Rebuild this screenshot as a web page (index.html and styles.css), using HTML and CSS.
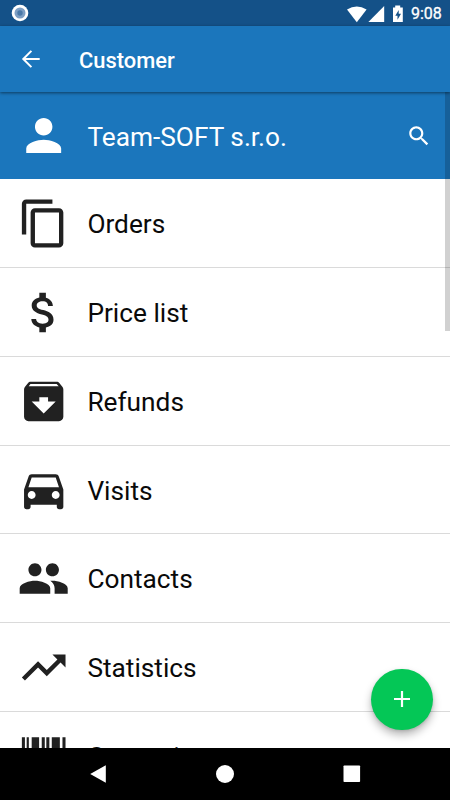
FILE: index.html
```html
<!DOCTYPE html>
<html lang="en">
<head>
<meta charset="utf-8">
<title>Customer</title>
<link rel="stylesheet" href="styles.css">
</head>
<body>
<div class="screen">
  <div class="status">
    <svg class="dot" viewBox="0 0 18 18"><circle cx="9" cy="9" r="8.3" fill="#fff"/><circle cx="9" cy="9" r="5.5" fill="#7d9fc4"/><circle cx="9" cy="9" r="2.7" fill="#4a79a9"/></svg>
    <svg class="signals" viewBox="0 0 60 18" fill="#fff">
      <path d="M0 3.4Q9.8-2.6 19.6 3.4L9.8 16.2Z"/>
      <path d="M37.2 0V16H21.4Z"/>
      <path fill-rule="evenodd" d="M46 1.4h2.2V-.4h5v1.8h2.6V16H46ZM51.7 4l-3.4 5.7h2.2v4l3.5-6h-2.3Z"/>
    </svg>
    <span class="clock">9:08</span>
  </div>
  <header class="toolbar">
    <svg class="back" viewBox="0 0 24 24"><path fill="none" stroke="#fff" stroke-width="2" d="M20.700 12H4.500M12.400 3.900L4.300 12l8.100 8.100"/></svg>
    <h1>Customer</h1>
  </header>
  <main class="content">
    <div class="row hero">
      <svg class="icon" viewBox="0 0 24 24"><path d="M12 12c2.21 0 4-1.79 4-4s-1.79-4-4-4-4 1.79-4 4 1.79 4 4 4zm0 2c-2.67 0-8 1.34-8 4v2h16v-2c0-2.66-5.33-4-8-4z"/></svg>
      <span>Team-SOFT s.r.o.</span>
      <svg class="search" viewBox="0 0 24 24"><path d="M15.5 14h-.79l-.28-.27C15.41 12.59 16 11.11 16 9.5 16 5.91 13.09 3 9.5 3S3 5.91 3 9.5 5.91 16 9.5 16c1.61 0 3.09-.59 4.23-1.57l.27.28v.79l5 4.99L20.49 19l-4.99-5zm-6 0C7.01 14 5 11.99 5 9.5S7.01 5 9.5 5 14 7.01 14 9.5 11.99 14 9.5 14z"/></svg>
    </div>
    <div class="row">
      <svg class="icon" viewBox="0 0 24 24"><path d="M16 1H4c-1.1 0-2 .9-2 2v14h2V3h12V1zm3 4H8c-1.1 0-2 .9-2 2v14c0 1.1.9 2 2 2h11c1.1 0 2-.9 2-2V7c0-1.1-.9-2-2-2zm0 16H8V7h11v14z"/></svg>
      <span>Orders</span>
    </div>
    <div class="row">
      <svg class="icon" viewBox="0 0 24 24"><path d="M11.8 10.9c-2.27-.59-3-1.2-3-2.15 0-1.09 1.01-1.85 2.7-1.85 1.78 0 2.44.85 2.5 2.1h2.21c-.07-1.72-1.12-3.3-3.21-3.81V3h-3v2.16c-1.94.42-3.5 1.68-3.5 3.61 0 2.31 1.91 3.46 4.7 4.13 2.5.6 3 1.48 3 2.41 0 .69-.49 1.79-2.7 1.79-2.06 0-2.87-.92-2.98-2.1h-2.2c.12 2.19 1.76 3.42 3.68 3.83V21h3v-2.15c1.95-.37 3.5-1.5 3.5-3.55 0-2.84-2.43-3.81-4.7-4.4z"/></svg>
      <span>Price list</span>
    </div>
    <div class="row">
      <svg class="icon" viewBox="0 0 24 24"><path d="M20.54 5.23l-1.39-1.68C18.88 3.21 18.47 3 18 3H6c-.47 0-.88.21-1.16.55L3.46 5.23C3.17 5.57 3 6.02 3 6.5V19c0 1.1.9 2 2 2h14c1.1 0 2-.9 2-2V6.5c0-.48-.17-.93-.46-1.27zM12 17.5L6.5 12H10v-2h4v2h3.5L12 17.5zM5.12 5l.81-1h12l.94 1H5.12z"/></svg>
      <span>Refunds</span>
    </div>
    <div class="row">
      <svg class="icon" viewBox="0 0 24 24"><path d="M18.92 6.01C18.72 5.42 18.16 5 17.5 5h-11c-.66 0-1.21.42-1.42 1.01L3 12v8c0 .55.45 1 1 1h1c.55 0 1-.45 1-1v-1h12v1c0 .55.45 1 1 1h1c.55 0 1-.45 1-1v-8l-2.08-5.99zM6.500 16.300c-1 0-1.800-.8-1.800-1.800s.8-1.800 1.800-1.800 1.800.8 1.800 1.800-.8 1.800-1.800 1.800zm11 0c-1 0-1.800-.8-1.800-1.800s.8-1.800 1.800-1.800 1.800.8 1.800 1.800-.8 1.800-1.800 1.800zM5 11l1.5-4.5h11L19 11H5z"/></svg>
      <span>Visits</span>
    </div>
    <div class="row">
      <svg class="icon" viewBox="0 0 24 24"><path d="M16 11c1.66 0 2.99-1.34 2.99-3S17.66 5 16 5c-1.66 0-3 1.34-3 3s1.34 3 3 3zm-8 0c1.66 0 2.99-1.34 2.99-3S9.66 5 8 5C6.34 5 5 6.34 5 8s1.34 3 3 3zm0 2c-2.33 0-7 1.17-7 3.5V19h14v-2.500c0-2.330-4.670-3.500-7-3.500zm8 0c-.29 0-.62.02-.97.05 1.160.84 1.970 1.970 1.970 3.450V19h6v-2.500c0-2.330-4.670-3.500-7-3.500z"/></svg>
      <span>Contacts</span>
    </div>
    <div class="row">
      <svg class="icon" viewBox="0 0 24 24"><path d="M16 6l2.290 2.290-4.880 4.880-4-4L2 16.590 3.410 18l6-6 4 4 6.300-6.290L22 12V6z"/></svg>
      <span>Statistics</span>
    </div>
    <div class="row">
      <svg class="icon" viewBox="0 0 24 24"><path d="M2 3.200h1.400v17H2zM4.200 3.200h1v17h-1zM6.500 3.200h3.400v17H6.500zM11.100 3.200h1.400v17h-1.400zM13.200 3.200h1.400v17h-1.400zM15.700 3.200h3.700v17h-3.700zM20.600 3.200h1.400v17h-1.400z"/></svg>
      <span>Corrections</span>
    </div>
    <div class="scrollbar"></div>
  </main>
  <nav class="nav">
    <svg viewBox="0 0 20 20"><path d="M1.200 10L16.800 1.200V18.800Z"/></svg>
    <svg viewBox="0 0 20 20"><circle cx="10" cy="10" r="9"/></svg>
    <svg viewBox="0 0 20 20"><rect x="1.500" y="1.500" width="16.600" height="16.600" rx=".8"/></svg>
  </nav>
  <button class="fab" aria-label="Add"><svg viewBox="0 0 16 16"><path d="M8 0v16M0 8h16" stroke="#fff" stroke-width="2.200"/></svg></button>
</div>
</body>
</html>
```
FILE: styles.css
```css
* { box-sizing: border-box; }
body { margin: 0; font-family: Roboto, sans-serif; }
svg { display: block; flex: none; }
.screen {
  position: relative;
  display: flex;
  flex-direction: column;
  width: 450px;
  height: 800px;
  overflow: hidden;
  background: #fff;
}
.status {
  flex: none;
  display: flex;
  align-items: center;
  height: 26px;
  padding: 0 8px 0 11px;
  background: #145188;
  color: #fff;
}
.dot { width: 18px; height: 18px; }
.signals { width: 60px; height: 18px; margin: 3px 4px 0 auto; overflow: visible; }
.clock { width: 31px; font-size: 16px; line-height: 26px; padding-top: 2px; -webkit-text-stroke: .3px #fff; }
.toolbar {
  position: relative;
  z-index: 1;
  flex: none;
  display: flex;
  align-items: center;
  gap: 36px;
  height: 66px;
  padding: 0 19px;
  background: #1b76bc;
  color: #fff;
  box-shadow: 0 1px 3px rgba(0, 0, 0, .5);
}
.back { width: 24px; height: 24px; }
.toolbar h1 { margin: 2px 0 0; font-size: 21.900px; font-weight: 500; }
.content { position: relative; flex: 1; min-height: 0; overflow: hidden; }
.row {
  display: flex;
  align-items: center;
  gap: 18px;
  height: 88.800px;
  padding: 0 18px 0 17px;
  border-bottom: 1px solid #dadada;
  font-size: 26.250px;
  color: #0a0a0a;
}
.row span { padding-top: 2px; }
.icon { width: 52.400px; height: 52.400px; fill: #212121; transform: translate(.5px, .3px); }
.hero { height: 87.300px; background: #1b76bc; color: #fff; border: 0; }
.hero .icon, .search { fill: #fff; }
.search { width: 26px; height: 26px; margin-left: auto; }
.scrollbar {
  position: absolute;
  top: 0;
  right: 0;
  width: 5px;
  height: 239px;
  background: rgba(0, 0, 0, .18);
}
.nav {
  flex: none;
  display: flex;
  align-items: center;
  justify-content: space-between;
  height: 52.500px;
  padding: 0 88.500px;
  background: #000;
  fill: #fff;
}
.nav svg { width: 20px; height: 20px; }
.fab {
  position: absolute;
  left: 371px;
  top: 668.500px;
  display: grid;
  place-items: center;
  width: 61.500px;
  height: 61.500px;
  padding: 0;
  border: 0;
  border-radius: 50%;
  background: #04c756;
  box-shadow: 0 5px 9px rgba(0, 0, 0, .28), 0 1px 3px rgba(0, 0, 0, .12);
}
.fab svg { width: 16px; height: 16px; }
```
